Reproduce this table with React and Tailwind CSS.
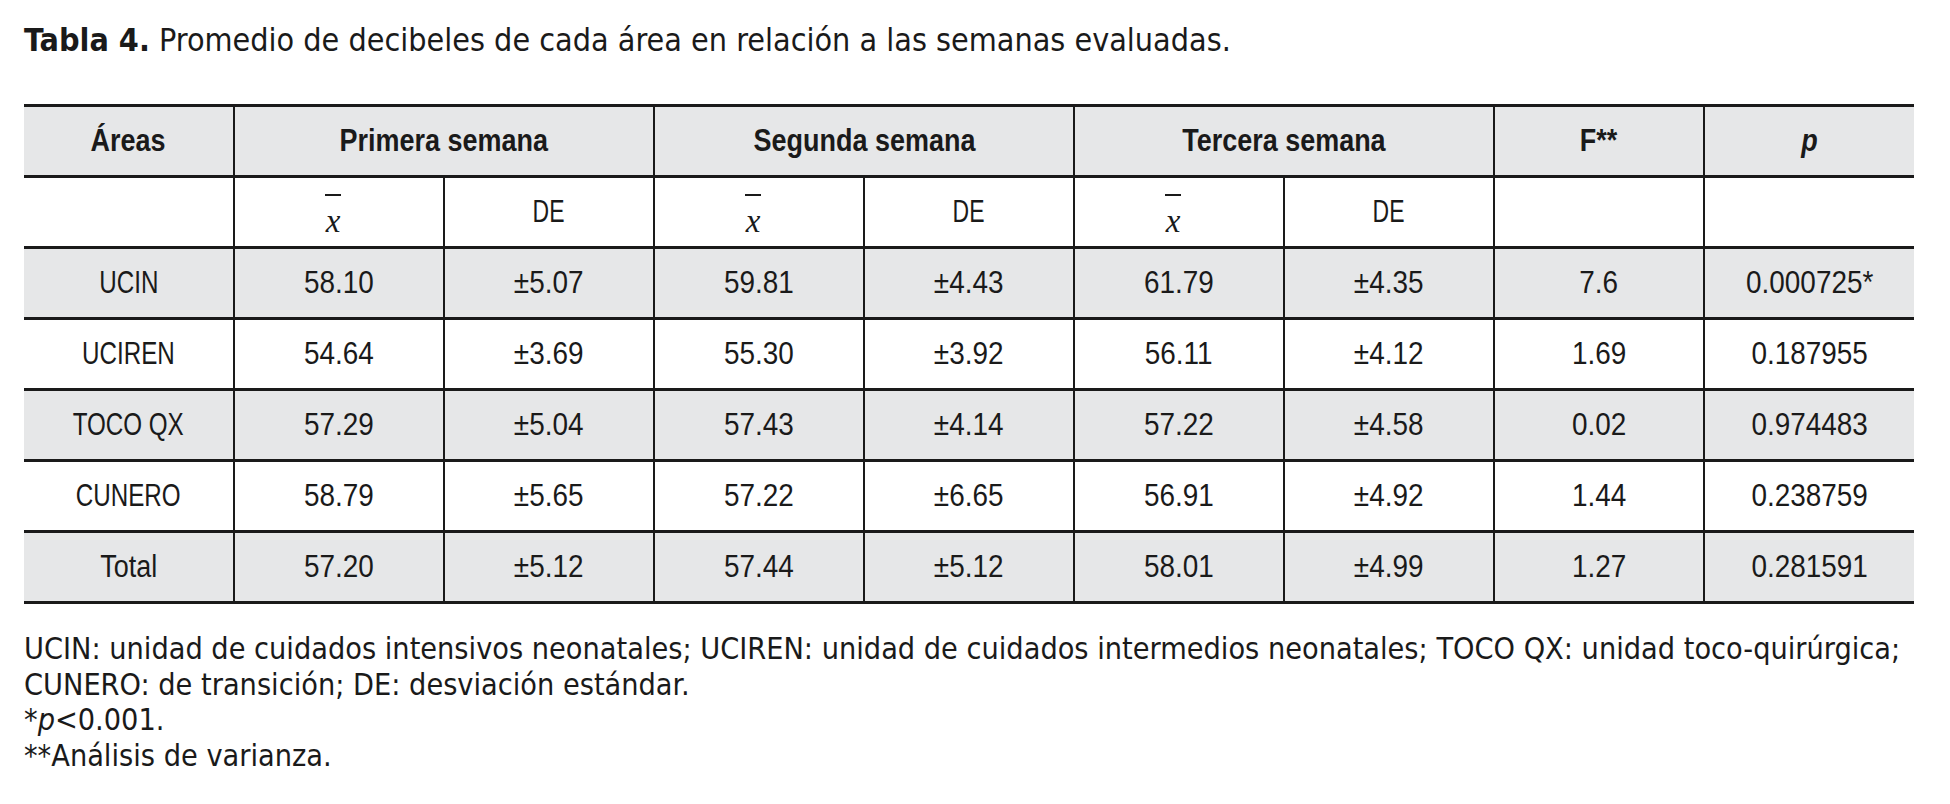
const rows = [
    { area: 'UCIN', v: ['58.10', '±5.07', '59.81', '±4.43', '61.79', '±4.35', '7.6', '0.000725*'] },
    { area: 'UCIREN', v: ['54.64', '±3.69', '55.30', '±3.92', '56.11', '±4.12', '1.69', '0.187955'] },
    { area: 'TOCO QX', v: ['57.29', '±5.04', '57.43', '±4.14', '57.22', '±4.58', '0.02', '0.974483'] },
    { area: 'CUNERO', v: ['58.79', '±5.65', '57.22', '±6.65', '56.91', '±4.92', '1.44', '0.238759'] },
    { area: 'Total', v: ['57.20', '±5.12', '57.44', '±5.12', '58.01', '±4.99', '1.27', '0.281591'] },
]

// the table face is a condensed grotesk; squeeze Liberation Sans to match
const Narrow = ({ children, k = 'num' }) => {
    const s = {
        num: 'scale-x-[0.9]',
        cap: 'scale-x-[0.78]',
        head: 'scale-x-[0.87]',
        de: 'scale-x-[0.74]',
    }[k]
    return <span className={`inline-block whitespace-nowrap ${s}`}>{children}</span>
}

const XBar = () => (
    <div className="flex flex-col items-center pr-[12px]">
        <div className="w-[16px] h-[2px] bg-[#1a1a1a]"></div>
        <span className="mt-[15px] leading-[20px] text-[33px] italic font-['Liberation_Serif',serif]">x</span>
    </div>
)

const cell = "h-[71px] p-0 text-center align-middle border-l-2 border-[#1a1a1a] first:border-l-0"

const App = () => {
    return (
        <div className="min-h-screen bg-white text-[#1a1a1a] pl-[24px] pr-[36px] pt-[22px]">
            <p className="text-[32px] leading-[36px] font-['DejaVu_Sans_Condensed','DejaVu_Sans',sans-serif] [font-stretch:condensed]">
                <b>Tabla 4.</b> Promedio de decibeles de cada área en relación a las semanas evaluadas.
            </p>

            <table className="mt-[46px] w-[1890px] table-fixed border-collapse font-['Liberation_Sans',Arial,sans-serif] text-[31px]">
                <colgroup>
                    {Array.from({ length: 9 }).map((_, i) => <col key={i} className="w-[210px]" />)}
                </colgroup>
                <tbody>
                    <tr className="bg-[#e6e7e8] border-y-[3px] border-[#1a1a1a] font-bold">
                        <td className={cell}><Narrow k="head">Áreas</Narrow></td>
                        <td className={cell} colSpan={2}><Narrow k="head">Primera semana</Narrow></td>
                        <td className={cell} colSpan={2}><Narrow k="head">Segunda semana</Narrow></td>
                        <td className={cell} colSpan={2}><Narrow k="head">Tercera semana</Narrow></td>
                        <td className={cell}><Narrow k="head">F**</Narrow></td>
                        <td className={cell}><Narrow k="head"><i>p</i></Narrow></td>
                    </tr>
                    <tr className="border-y-[3px] border-[#1a1a1a]">
                        <td className={cell}></td>
                        <td className={cell}><XBar /></td>
                        <td className={cell}><Narrow k="de">DE</Narrow></td>
                        <td className={cell}><XBar /></td>
                        <td className={cell}><Narrow k="de">DE</Narrow></td>
                        <td className={cell}><XBar /></td>
                        <td className={cell}><Narrow k="de">DE</Narrow></td>
                        <td className={cell}></td>
                        <td className={cell}></td>
                    </tr>
                    {rows.map((r, i) => (
                        <tr key={r.area} className={`border-y-[3px] border-[#1a1a1a] ${i % 2 === 0 ? 'bg-[#e6e7e8]' : 'bg-white'}`}>
                            <td className={cell}><Narrow k={r.area === 'Total' ? 'head' : 'cap'}>{r.area}</Narrow></td>
                            {r.v.map((x, j) => <td key={j} className={cell}><Narrow>{x}</Narrow></td>)}
                        </tr>
                    ))}
                </tbody>
            </table>

            <div className="mt-[27px] text-[30.3px] leading-[35.5px] font-['DejaVu_Sans_Condensed','DejaVu_Sans',sans-serif] [font-stretch:condensed]">
                <p>UCIN: unidad de cuidados intensivos neonatales; UCIREN: unidad de cuidados intermedios neonatales; TOCO QX: unidad toco-quirúrgica;</p>
                <p>CUNERO: de transición; DE: desviación estándar.</p>
                <p>*<i>p</i>&lt;0.001.</p>
                <p>**Análisis de varianza.</p>
            </div>
        </div>
    )
}

export default App
